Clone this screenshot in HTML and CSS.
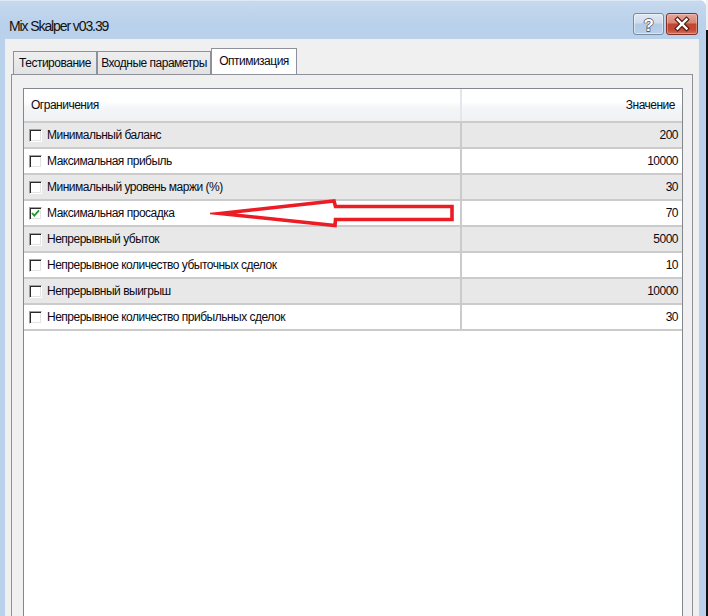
FILE: index.html
```html
<!DOCTYPE html>
<html lang="ru">
<head>
<meta charset="utf-8">
<title>Mix Skalper v03.39</title>
<link rel="stylesheet" href="styles.css">
</head>
<body>
<div class="screen">
  <div class="window">
    <div class="titlebar">
      <span class="title">Mix Skalper v03.39</span>
      <div class="caption-buttons">
        <div class="cbtn help">
          <svg width="31" height="22" viewBox="0 0 31 22"><text x="15.5" y="17.5" text-anchor="middle" font-family="Liberation Sans, Arial, sans-serif" font-weight="bold" font-size="17" fill="#fff" stroke="#3d4757" stroke-width="1.3" paint-order="stroke">?</text></svg>
        </div>
        <div class="cbtn close">
          <svg width="32" height="22" viewBox="0 0 32 22"><path d="M11.5 6.5 L20.5 15.5 M20.5 6.5 L11.5 15.5" stroke="#4a1d16" stroke-width="4.6" stroke-linecap="square"/><path d="M11.5 6.5 L20.5 15.5 M20.5 6.5 L11.5 15.5" stroke="#fff" stroke-width="2.4" stroke-linecap="square"/></svg>
        </div>
      </div>
    </div>
    <div class="client">
      <div class="tabs">
        <div class="tab t1">Тестирование</div>
        <div class="tab t2">Входные параметры</div>
        <div class="tab t3 active">Оптимизация</div>
      </div>
      <div class="tabpanel">
        <div class="list">
          <div class="list-header">
            <div class="hcell name">Ограничения</div>
            <div class="hcell val">Значение</div>
          </div>
          <div class="row odd"><div class="cell name"><span class="cb"></span>Минимальный баланс</div><div class="cell val">200</div></div>
          <div class="row"><div class="cell name"><span class="cb"></span>Максимальная прибыль</div><div class="cell val">10000</div></div>
          <div class="row odd"><div class="cell name"><span class="cb"></span>Минимальный уровень маржи (%)</div><div class="cell val">30</div></div>
          <div class="row"><div class="cell name"><span class="cb checked"><svg width="11" height="11" viewBox="0 0 11 11"><path d="M2 5 L4.3 7.6 L9 2.4" fill="none" stroke="#1f9a2a" stroke-width="1.8"/></svg></span>Максимальная просадка</div><div class="cell val">70</div></div>
          <div class="row odd"><div class="cell name"><span class="cb"></span>Непрерывный убыток</div><div class="cell val">5000</div></div>
          <div class="row"><div class="cell name"><span class="cb"></span>Непрерывное количество убыточных сделок</div><div class="cell val">10</div></div>
          <div class="row odd"><div class="cell name"><span class="cb"></span>Непрерывный выигрыш</div><div class="cell val">10000</div></div>
          <div class="row last"><div class="cell name"><span class="cb"></span>Непрерывное количество прибыльных сделок</div><div class="cell val">30</div></div>
        </div>
      </div>
    </div>
  </div>
  <div class="edge"></div>
  <svg class="arrow" width="250" height="45" viewBox="0 0 250 45"><polygon points="10,23.5 124,11 125.5,16.5 242,16.5 242,29.5 125.5,29.5 125,35.5" fill="none" stroke="#ec1c24" stroke-width="3.6" stroke-linejoin="miter" stroke-miterlimit="10"/></svg>
</div>
</body>
</html>
```
FILE: styles.css
```css
html, body {
  margin: 0;
  padding: 0;
  background: #ffffff;
}
body {
  font-family: "Liberation Sans", Arial, sans-serif;
  font-size: 12px;
  letter-spacing: -0.5px;
  color: #0a0a14;
}
.screen {
  position: relative;
  display: flex;
  width: 708px;
  height: 616px;
  overflow: hidden;
}
.window {
  width: 706px;
  height: 616px;
  display: flex;
  flex-direction: column;
  background: #b9d1ea;
  border-top-right-radius: 7px;
  overflow: hidden;
}
.edge {
  width: 2px;
  background: linear-gradient(#f0f0f0 0 30px, #111 30px);
}
.titlebar {
  height: 39px;
  flex: none;
  display: flex;
  align-items: flex-start;
  justify-content: space-between;
  padding: 0 8px 0 9px;
  background: linear-gradient(#c6d9ee, #b9d1ea 60%);
  border-top: 1px solid #dce8f4;
  box-sizing: border-box;
}
.title {
  margin-top: 16px;
  font-size: 14px;
  letter-spacing: -1.1px;
  line-height: 18px;
  color: #111;
}
.caption-buttons {
  display: flex;
  gap: 2px;
  margin-top: 12px;
}
.cbtn {
  height: 22px;
  box-sizing: border-box;
  border-radius: 3px;
  display: flex;
}
.cbtn svg { display: block; margin: -1px; }
.help {
  width: 31px;
  border: 1px solid #7a8aa0;
  background: linear-gradient(#e0e9f4, #cfdcec 45%, #b3cae5 50%, #b8cfe8);
  box-shadow: inset 0 0 0 1px rgba(255,255,255,0.45);
}
.close {
  width: 32px;
  border: 1px solid #7d3128;
  background: linear-gradient(#e6a597, #d88474 45%, #c2452f 50%, #c44a34 80%, #d2765f);
  box-shadow: inset 0 0 0 1px rgba(255,255,255,0.3);
}
.client {
  flex: 1;
  display: flex;
  flex-direction: column;
  margin: 0 7px 0 5px;
  padding: 9px 6px 0 6px;
  background: #f0f0f0;
  min-height: 0;
}
.tabs {
  display: flex;
  align-items: flex-end;
  height: 26px;
  padding-left: 2px;
  flex: none;
}
.tab {
  box-sizing: border-box;
  height: 23px;
  border: 1px solid #8e919a;
  border-bottom: none;
  background: linear-gradient(#efefef, #e2e2e2);
  text-align: center;
  line-height: 22px;
  white-space: nowrap;
}
.t1 { width: 84px; }
.t2 { width: 114px; }
.t3 { width: 86px; }
.tab.active {
  height: 26px;
  line-height: 24px;
  background: #ffffff;
  border-color: #8e919a;
}
.tabpanel {
  flex: 1;
  display: flex;
  flex-direction: column;
  border: 1px solid #8e919a;
  border-bottom: none;
  padding: 13px 9px 0 11px;
  background: #f0f0f0;
  min-height: 0;
}
.list {
  flex: 1;
  border: 1px solid #828790;
  border-bottom: none;
  background: #ffffff;
}
.list-header {
  display: grid;
  grid-template-columns: 438px 1fr;
  height: 32px;
  background: linear-gradient(#ffffff 40%, #f4f5f7 60%, #f1f2f4);
}
.hcell {
  line-height: 32px;
}
.hcell.name {
  padding-left: 7px;
  border-right: 2px solid #e3e6ea;
}
.hcell.val {
  text-align: right;
  padding-right: 7px;
}
.row {
  display: grid;
  grid-template-columns: 438px 1fr;
  height: 24px;
  border-top: 2px solid #cbcbcb;
  background: #ffffff;
}
.row.odd { background: #e8e8e8; }
.row.last { border-bottom: 2px solid #cbcbcb; }
.cell {
  line-height: 24px;
  white-space: nowrap;
}
.cell.name {
  display: flex;
  align-items: center;
  padding-left: 5px;
  border-right: 2px solid #cbcbcb;
}
.cell.val {
  text-align: right;
  padding-right: 4px;
}
.cb {
  flex: none;
  width: 13px;
  height: 13px;
  box-sizing: border-box;
  margin-right: 5px;
  border: 1px solid;
  border-color: #a0a0a0 #ffffff #ffffff #a0a0a0;
  box-shadow: inset 1px 1px 0 #2a2a2a, inset -1px -1px 0 #e3e3e3;
  background: #ffffff;
  display: flex;
  align-items: center;
  justify-content: center;
}
.cb svg { display: block; }
.arrow {
  position: absolute;
  left: 210px;
  top: 190px;
}
```
